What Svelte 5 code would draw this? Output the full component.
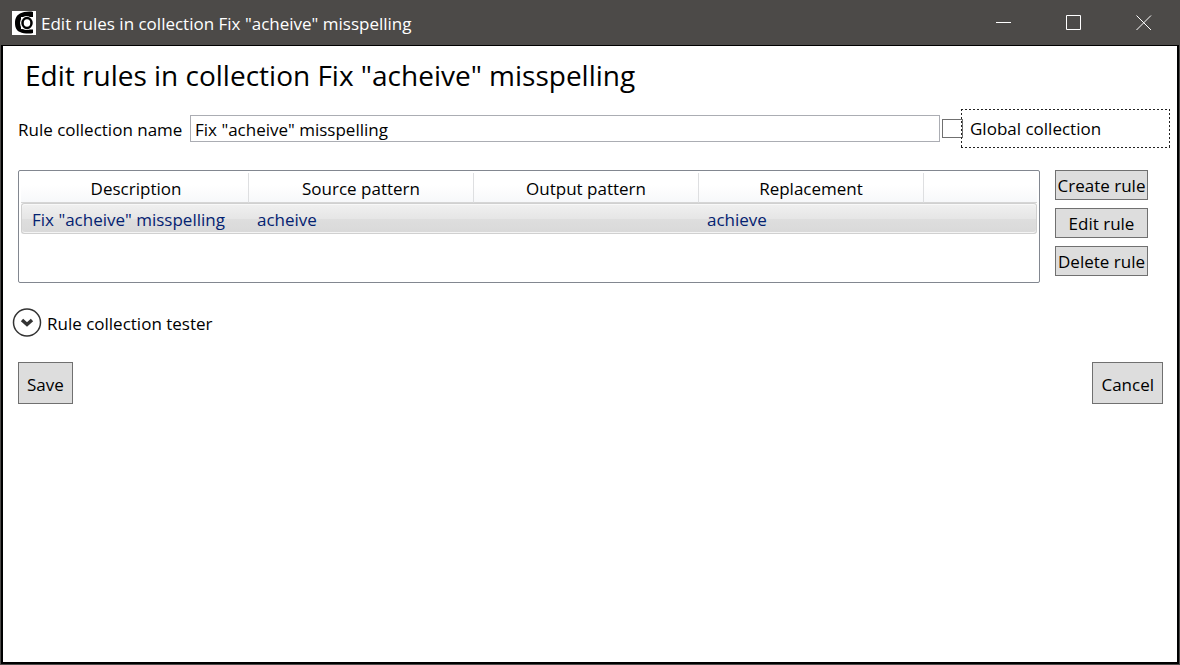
<script>
  let name = $state('Fix "acheive" misspelling');
  let isGlobal = $state(false);
  const title = 'Edit rules in collection Fix "acheive" misspelling';
  const columns = ['Description', 'Source pattern', 'Output pattern', 'Replacement'];
  const rules = [['Fix "acheive" misspelling', 'acheive', '', 'achieve']];
</script>

<div class="window">
  <header class="titlebar">
    <svg class="logo" width="24" height="24" viewBox="0 0 24 24" aria-hidden="true">
      <rect width="24" height="24" fill="#fff" />
      <path d="M21 1v5h-3L9 6v12l9 .5h3V22c-3 1-10 .6-13-1-3-1-5-4-5-9s2-8 5-9.500c3-1.500 9-2.500 13-1.500z" fill="#000" />
      <ellipse cx="14.500" cy="12" rx="6.500" ry="7" fill="#fff" />
      <ellipse cx="15" cy="12" rx="4.500" ry="5" fill="#fff" stroke="#000" stroke-width="2.500" />
    </svg>
    <span class="caption">{title}</span>
    <button class="win" aria-label="Minimize">
      <svg width="16" height="16" viewBox="0 0 16 16"><path d="M0 7.5h15" /></svg>
    </button>
    <button class="win" aria-label="Maximize">
      <svg width="16" height="16" viewBox="0 0 16 16"><path d="M.5.5h14v14H.5z" /></svg>
    </button>
    <button class="win" aria-label="Close">
      <svg width="16" height="16" viewBox="0 0 16 16"><path d="M.5.5l14.5 14.5M15 .5L.5 15" /></svg>
    </button>
  </header>

  <main>
    <h1>{title}</h1>

    <div class="namerow">
      <label class="namelabel" for="name">Rule collection name</label>
      <input id="name" class="name" type="text" bind:value={name} />
      <input id="global" class="check" type="checkbox" bind:checked={isGlobal} />
      <label class="global" for="global">Global collection</label>
    </div>

    <div class="rules">
      <div class="list">
        <table>
          <colgroup>
            <col class="first" /><col class="col" /><col class="col" /><col class="col" /><col />
          </colgroup>
          <thead>
            <tr>
              {#each columns as column}<th scope="col">{column}</th>{/each}
              <td></td>
            </tr>
          </thead>
          <tbody>
            {#each rules as rule}
              <tr>
                {#each rule as cell}<td>{cell}</td>{/each}
                <td></td>
              </tr>
            {/each}
          </tbody>
        </table>
      </div>
      <div class="actions">
        <button>Create rule</button>
        <button>Edit rule</button>
        <button>Delete rule</button>
      </div>
    </div>

    <button class="expander" aria-expanded="false">
      <svg width="30" height="30" viewBox="0 0 30 30" aria-hidden="true">
        <circle cx="15" cy="14.5" r="13.5" fill="#fff" stroke="#333" stroke-width="1.5" />
        <path d="M10 12l5 4.500 5-4.500" fill="none" stroke="#333" stroke-width="3.500" />
      </svg>
      <span>Rule collection tester</span>
    </button>

    <footer>
      <button>Save</button>
      <button>Cancel</button>
    </footer>
  </main>
</div>

<style>
  :global(body) { margin: 0; }
  * { box-sizing: border-box; }
  .window {
    display: flex;
    flex-direction: column;
    min-height: 100vh;
    padding: 1px;
    background: #4c4a48;
    font: 17px/24px "Segoe UI", "Open Sans", sans-serif;
    color: #000;
  }
  button, input { font: inherit; color: inherit; }
  .titlebar {
    display: flex;
    align-items: center;
    height: 44px;
    padding-left: 11px;
    color: #fff;
  }
  .logo { flex: none; margin-right: 5px; }
  .caption { flex: 1; padding-top: 2px; }
  .win {
    display: grid;
    place-items: center;
    width: 70px;
    height: 44px;
    padding: 0;
    border: 0;
    background: none;
  }
  .win svg { fill: none; stroke: #fff; stroke-width: 1; }
  main {
    flex: 1;
    padding: 9px 7px 16px 15px;
    border: 2px solid #000;
    border-top-width: 1px;
    background: #fff;
  }
  h1 {
    margin: 0 0 14px 7px;
    font-size: 28px;
    line-height: 40px;
    font-weight: 400;
  }
  .namerow { display: flex; align-items: center; }
  .namelabel { width: 172px; padding-top: 2px; }
  .name {
    flex: 1;
    min-width: 0;
    height: 27px;
    margin: 0 2px 0 0;
    padding: 2px 4px 0;
    border: 1px solid #abadb3;
    border-radius: 0;
    outline: none;
  }
  .check {
    appearance: none;
    width: 21px;
    height: 19px;
    margin: 0 -2px 0 0;
    border: 1px solid #707070;
    background: #fff;
  }
  .check:checked { background: #707070; }
  .global {
    width: 209px;
    height: 39px;
    padding: 8px 9px;
    --across: repeating-linear-gradient(90deg, #222 0 2px, transparent 2px 4px);
    --down: repeating-linear-gradient(#222 0 2px, transparent 2px 4px);
    background:
      var(--across) top / 100% 1px no-repeat,
      var(--across) bottom / 100% 1px no-repeat,
      var(--down) left / 1px 100% no-repeat,
      var(--down) right / 1px 100% no-repeat;
    z-index: 1;
  }
  .rules {
    display: flex;
    align-items: flex-start;
    gap: 15px;
    margin-top: 22px;
    padding-right: 22px;
  }
  .list {
    flex: 1;
    min-height: 113px;
    padding: 2px;
    border: 1px solid #828790;
    border-radius: 2px;
  }
  table {
    width: 100%;
    table-layout: fixed;
    border-collapse: separate;
    border-spacing: 0;
  }
  .first { width: 228px; }
  .col { width: 225px; }
  thead th, thead td {
    height: 30px;
    padding: 3px 0 0;
    border-right: 1px solid #dedfe1;
    border-bottom: 1px solid #d5d5d5;
    background: linear-gradient(#fff 40%, #f7f8fa);
    font-weight: 400;
  }
  thead th:first-child { padding-left: 3px; }
  thead td { border-right: 0; }
  tbody td {
    height: 31px;
    padding: 2px 9px 0 8px;
    border: 0 solid #d0d0d0;
    border-width: 1px 0;
    background: linear-gradient(#f0f0f0, #e6e6e6 50%, #dedede 50%, #d9d9d9);
    box-shadow: inset 0 1px #f8f8f8, inset 0 -1px #f4f4f4;
    color: #042271;
  }
  tbody td:first-child {
    padding-left: 10px;
    border-left-width: 1px;
    border-radius: 3px 0 0 3px;
  }
  tbody td:last-child {
    border-right-width: 1px;
    border-radius: 0 3px 3px 0;
  }
  .actions { display: grid; gap: 8px; width: 93px; }
  .actions button, footer button {
    padding: 2px 0 0;
    border: 1px solid #707070;
    background: #ddd;
    white-space: nowrap;
  }
  .actions button { height: 30px; }
  .expander {
    display: flex;
    align-items: center;
    gap: 5px;
    margin: 25px 0 0 -6px;
    padding: 0;
    border: 0;
    background: none;
  }
  .expander span { padding-top: 2px; }
  footer {
    display: flex;
    justify-content: space-between;
    margin-top: 24px;
    padding-right: 7px;
  }
  footer button { height: 42px; padding: 4px 8px 0; }
</style>
